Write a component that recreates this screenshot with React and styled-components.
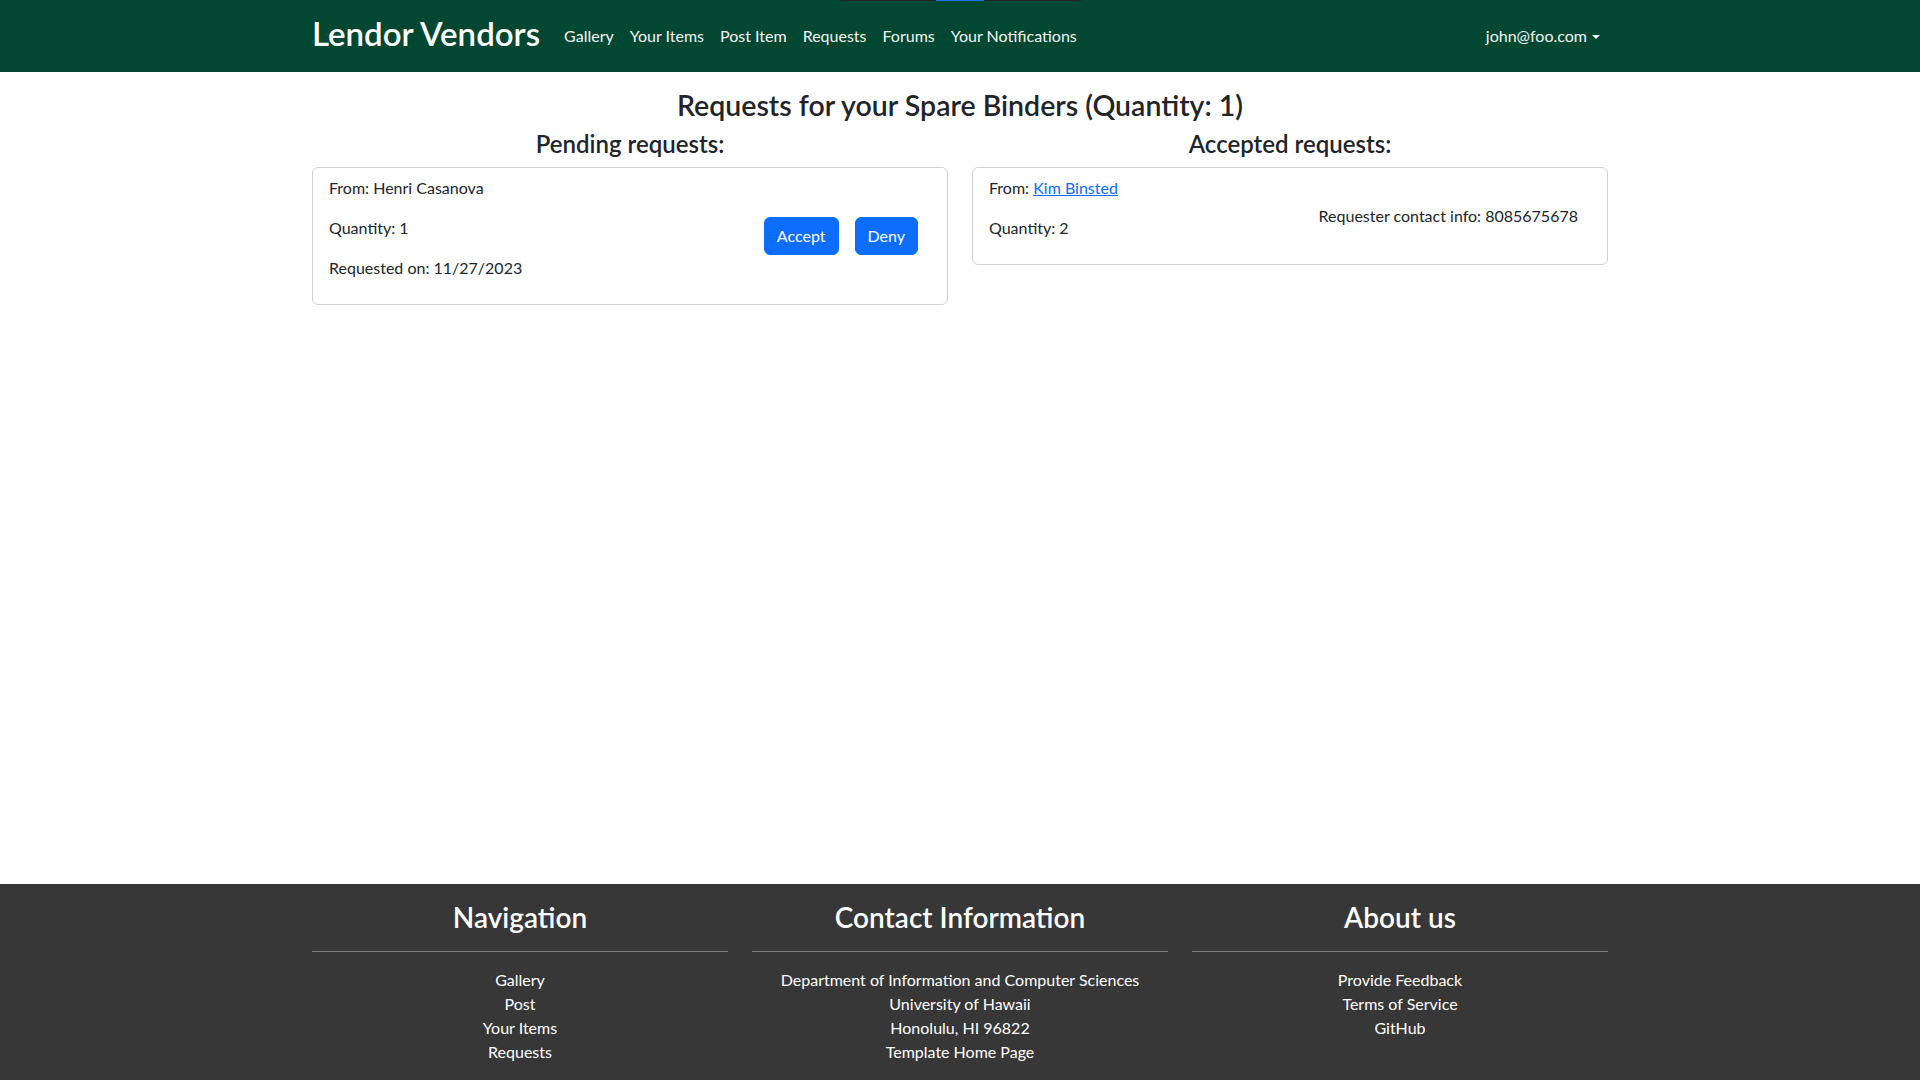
import React from "react";
import styled, { createGlobalStyle } from "styled-components";

const Global = createGlobalStyle`
  * { box-sizing: border-box; }
  html, body { margin: 0; padding: 0; }
  body {
    font-family: Lato, "Liberation Sans", sans-serif;
    font-size: 16px;
    line-height: 1.5;
    color: #212529;
    background: #fff;
  }
`;

const Page = styled.div`
  min-height: 100vh;
  display: flex;
  flex-direction: column;
`;

const TopStrip = styled.div`
  position: absolute;
  top: 0;
  left: 840px;
  width: 241px;
  height: 1px;
  background: #222;
  display: flex;
  justify-content: center;
`;

const StripActive = styled.span`
  display: block;
  width: 48px;
  height: 1px;
  margin-left: -2px;
  background: #1a73e8;
`;

const NavBar = styled.nav`
  background: #024731;
  height: 72px;
  display: flex;
  align-items: center;
`;

const Container = styled.div`
  width: 1320px;
  margin: 0 auto;
  padding: 0 12px;
`;

const NavInner = styled(Container)`
  display: flex;
  align-items: center;
  justify-content: space-between;
`;

const Left = styled.div`
  display: flex;
  align-items: center;
`;

const Brand = styled.a`
  font-size: 33px;
  font-weight: 600;
  color: #fff;
  text-decoration: none;
  margin-right: 16px;
  line-height: 1.2;
  padding-bottom: 4px;
`;

const NavLink = styled.a`
  color: #f4f4f4;
  text-decoration: none;
  padding: 8px;
  font-size: 16px;
`;

const UserMenu = styled.a`
  color: #f4f4f4;
  text-decoration: none;
  padding: 8px;
  display: flex;
  align-items: center;
  &::after {
    content: "";
    display: inline-block;
    margin-left: 5px;
    border-top: 4px solid #f4f4f4;
    border-left: 4px solid transparent;
    border-right: 4px solid transparent;
    margin-top: 1px;
  }
`;

const Main = styled(Container)`
  padding-top: 16px;
  flex: 1;
`;

const Title = styled.h3`
  margin: 0 0 8px;
  font-size: 28.5px;
  font-weight: 600;
  line-height: 1.2;
  text-align: center;
`;

const Columns = styled.div`
  display: grid;
  grid-template-columns: 1fr 1fr;
  column-gap: 24px;
  align-items: start;
`;

const ColHeading = styled.h4`
  margin: 0 0 8px;
  font-size: 24px;
  font-weight: 600;
  line-height: 1.2;
  text-align: center;
`;

const Card = styled.div`
  border: 1px solid rgba(0, 0, 0, 0.175);
  border-radius: 6px;
  padding: 8px 16px;
  display: flex;
  align-items: center;
  justify-content: space-between;
`;

const Info = styled.div``;

const Line = styled.p`
  margin: 0 0 16px;
`;

const Link = styled.a`
  color: #0d6efd;
  text-decoration: underline;
`;

const Actions = styled.div`
  display: flex;
  gap: 16px;
  margin-right: 13px;
`;

const Button = styled.button`
  font-family: inherit;
  font-size: 16px;
  line-height: 1.5;
  padding: 6px 12px;
  border: 1px solid #0d6efd;
  border-radius: 6px;
  background: #0d6efd;
  color: #fff;
  cursor: pointer;
`;

const Contact = styled.div`
  margin-right: 13px;
`;

const Footer = styled.footer`
  background: #373737;
  color: #fff;
  padding: 17px 0 16px;
`;

const FooterGrid = styled(Container)`
  display: grid;
  grid-template-columns: repeat(3, 1fr);
  column-gap: 24px;
  text-align: center;
`;

const FooterHeading = styled.h3`
  margin: 0;
  font-size: 28px;
  font-weight: 600;
  line-height: 1.2;
`;

const Rule = styled.hr`
  margin: 16px 0 16px;
  border: 0;
  border-top: 1px solid rgba(255, 255, 255, 0.35);
`;

const FooterLink = styled.a`
  display: block;
  color: #fff;
  text-decoration: none;
`;

export default function App() {
  return (
    <Page>
      <Global />
      <TopStrip>
        <StripActive />
      </TopStrip>
      <NavBar>
        <NavInner>
          <Left>
            <Brand href="#">Lendor Vendors</Brand>
            <NavLink href="#">Gallery</NavLink>
            <NavLink href="#">Your Items</NavLink>
            <NavLink href="#">Post Item</NavLink>
            <NavLink href="#">Requests</NavLink>
            <NavLink href="#">Forums</NavLink>
            <NavLink href="#">Your Notifications</NavLink>
          </Left>
          <UserMenu href="#">john@foo.com</UserMenu>
        </NavInner>
      </NavBar>

      <Main>
        <Title>Requests for your Spare Binders (Quantity: 1)</Title>
        <Columns>
          <div>
            <ColHeading>Pending requests:</ColHeading>
            <Card>
              <Info>
                <Line>From: Henri Casanova</Line>
                <Line>Quantity: 1</Line>
                <Line>Requested on: 11/27/2023</Line>
              </Info>
              <Actions>
                <Button>Accept</Button>
                <Button>Deny</Button>
              </Actions>
            </Card>
          </div>
          <div>
            <ColHeading>Accepted requests:</ColHeading>
            <Card>
              <Info>
                <Line>
                  From: <Link href="#">Kim Binsted</Link>
                </Line>
                <Line>Quantity: 2</Line>
              </Info>
              <Contact>Requester contact info: 8085675678</Contact>
            </Card>
          </div>
        </Columns>
      </Main>

      <Footer>
        <FooterGrid>
          <div>
            <FooterHeading>Navigation</FooterHeading>
            <Rule />
            <FooterLink href="#">Gallery</FooterLink>
            <FooterLink href="#">Post</FooterLink>
            <FooterLink href="#">Your Items</FooterLink>
            <FooterLink href="#">Requests</FooterLink>
          </div>
          <div>
            <FooterHeading>Contact Information</FooterHeading>
            <Rule />
            <FooterLink as="div">Department of Information and Computer Sciences</FooterLink>
            <FooterLink as="div">University of Hawaii</FooterLink>
            <FooterLink as="div">Honolulu, HI 96822</FooterLink>
            <FooterLink href="#">Template Home Page</FooterLink>
          </div>
          <div>
            <FooterHeading>About us</FooterHeading>
            <Rule />
            <FooterLink href="#">Provide Feedback</FooterLink>
            <FooterLink href="#">Terms of Service</FooterLink>
            <FooterLink href="#">GitHub</FooterLink>
          </div>
        </FooterGrid>
      </Footer>
    </Page>
  );
}
